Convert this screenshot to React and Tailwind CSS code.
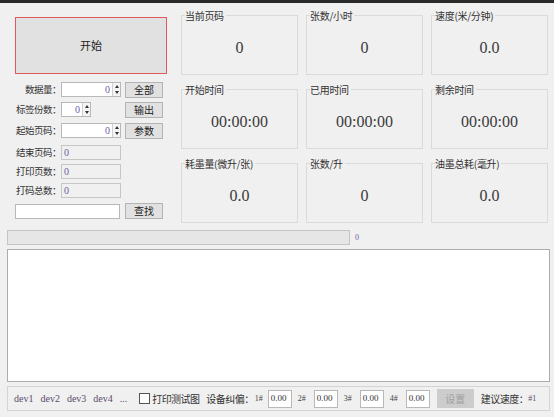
import React from 'react'

const cjk = { fontFamily: '"Noto Sans CJK SC", "Noto Sans", sans-serif' }
const serif = { fontFamily: '"Liberation Serif", "DejaVu Serif", serif' }

function Spinner() {
    return (
        <div className="flex flex-col w-[8px] h-[13px] border-l border-[#d0d0d0] bg-[#f4f4f4]">
            <div className="flex-1 flex items-center justify-center">
                <div className="w-0 h-0 border-l-[2.5px] border-r-[2.5px] border-b-[3px] border-l-transparent border-r-transparent border-b-[#333]" />
            </div>
            <div className="flex-1 flex items-center justify-center">
                <div className="w-0 h-0 border-l-[2.5px] border-r-[2.5px] border-t-[3px] border-l-transparent border-r-transparent border-t-[#333]" />
            </div>
        </div>
    )
}

function SpinInput({ width }) {
    return (
        <div className={`flex items-center h-[15px] border border-[#b8b8b8] bg-white ${width}`}>
            <span className="flex-1 text-right pr-[2px] text-[10px] leading-none text-[#6b5ca5]" style={serif}>0</span>
            <Spinner />
        </div>
    )
}

function Btn({ children }) {
    return (
        <div className="w-[38px] h-[16px] border border-[#b4b4b4] bg-[#e1e1e1] flex items-center justify-center text-[10px] leading-none text-[#222]" style={cjk}>
            {children}
        </div>
    )
}

function Label({ children }) {
    return (
        <div className="w-[46px] shrink-0 whitespace-nowrap text-right text-[9.5px] leading-none text-[#333] tracking-[-0.5px]" style={cjk}>{children}</div>
    )
}

function ReadRow({ label, className }) {
    return (
        <div className={`flex items-center h-[15px] ${className}`}>
            <Label>{label}</Label>
            <div className="w-[60px] h-[15px] border border-[#c6c6c6] bg-[#f0f0f0] flex items-center pl-[2px] text-[10px] leading-none text-[#6b5ca5]" style={serif}>0</div>
        </div>
    )
}

function Group({ title, value }) {
    return (
        <div className="relative h-[60px] border border-[#dadada]">
            <span className="absolute -top-[7px] left-[3px] bg-[#f0f0f0] pr-[2px] whitespace-nowrap text-[10px] leading-[13px] text-[#333] tracking-[-0.3px]" style={cjk}>{title}</span>
            <div className="h-full flex items-center justify-center pt-[5px] text-[16px] text-[#3a3a3a]" style={serif}>{value}</div>
        </div>
    )
}

const groups = [
    ['当前页码', '0'],
    ['张数/小时', '0'],
    ['速度(米/分钟)', '0.0'],
    ['开始时间', '00:00:00'],
    ['已用时间', '00:00:00'],
    ['剩余时间', '00:00:00'],
    ['耗墨量(微升/张)', '0.0'],
    ['张数/升', '0'],
    ['油墨总耗(毫升)', '0.0'],
]

function SmallInput() {
    return (
        <div className="w-[24px] h-[18px] shrink-0 border border-[#b8b8b8] bg-white flex items-center pl-[2px] text-[9px] leading-none text-[#333]" style={serif}>0.00</div>
    )
}

function Num({ children }) {
    return <span className="w-[10px] shrink-0 text-[8px] text-[#444] mx-[6px] whitespace-nowrap" style={serif}>{children}</span>
}

export default function App() {
    return (
        <div className="w-[554px] h-[417px] bg-[#f0f0f0] overflow-hidden">
            <div className="h-[3px] bg-[#2a2a2a]" />

            {/* top area */}
            <div className="flex h-[227px]">
                <div className="ml-[15px] mt-[14px] w-[152px]">
                    <div className="h-[57px] border border-[#e05a5a] bg-[#e1e1e1] flex items-center justify-center text-[11px] text-[#222]" style={cjk}>
                        开始
                    </div>

                    <div className="w-[148px] flex items-center justify-between h-[15px] mt-[8px]">
                        <div className="flex items-center">
                            <Label>数据量：</Label>
                            <SpinInput width="w-[60px]" />
                        </div>
                        <Btn>全部</Btn>
                    </div>
                    <div className="w-[148px] flex items-center justify-between h-[15px] mt-[5px]">
                        <div className="flex items-center">
                            <Label>标签份数：</Label>
                            <SpinInput width="w-[30px]" />
                        </div>
                        <Btn>输出</Btn>
                    </div>
                    <div className="w-[148px] flex items-center justify-between h-[15px] mt-[6px]">
                        <div className="flex items-center">
                            <Label>起始页码：</Label>
                            <SpinInput width="w-[60px]" />
                        </div>
                        <Btn>参数</Btn>
                    </div>

                    <ReadRow label="结束页码：" className="mt-[7px]" />
                    <ReadRow label="打印页数：" className="mt-[4px]" />
                    <ReadRow label="打码总数：" className="mt-[4px]" />

                    <div className="w-[148px] flex items-center justify-between mt-[5px]">
                        <div className="w-[105px] h-[15px] border border-[#b8b8b8] bg-white" />
                        <Btn>查找</Btn>
                    </div>
                </div>

                <div className="ml-[14px] mt-[12px] w-[367px] grid grid-cols-3 gap-x-[8px] gap-y-[14px] content-start">
                    {groups.map(([t, v]) => (
                        <Group key={t} title={t} value={v} />
                    ))}
                </div>
            </div>

            {/* progress */}
            <div className="flex items-center px-[7px]">
                <div className="w-[343px] h-[15px] border border-[#c4c4c4] bg-[#e6e6e6]" />
                <span className="ml-[5px] text-[8px] text-[#6b5ca5]" style={serif}>0</span>
            </div>

            {/* log */}
            <div className="mx-[7px] mt-[4px] w-[543px] h-[133px] border border-[#adadad] bg-white" />

            {/* status bar */}
            <div className="mx-[7px] mt-[4px] w-[543px] h-[25px] border border-[#d4d4d4] flex items-center pl-[6px] text-[#333]">
                <div className="flex gap-[7px] text-[10px] text-[#5a4d6b]" style={serif}>
                    <span>dev1</span>
                    <span>dev2</span>
                    <span>dev3</span>
                    <span>dev4</span>
                    <span>...</span>
                </div>
                <div className="ml-[12px] w-[11px] h-[11px] shrink-0 border border-[#555] bg-white" />
                <span className="ml-[2px] whitespace-nowrap text-[10px] tracking-[-0.6px]" style={cjk}>打印测试图</span>
                <span className="ml-[7px] whitespace-nowrap text-[10px] tracking-[-0.5px]" style={cjk}>设备纠偏：</span>
                <span className="w-[10px] shrink-0 text-[8px] text-[#444] ml-[1px] mr-[3px] whitespace-nowrap" style={serif}>1#</span>
                <SmallInput />
                <Num>2#</Num>
                <SmallInput />
                <Num>3#</Num>
                <SmallInput />
                <Num>4#</Num>
                <SmallInput />
                <div className="ml-[7px] w-[37px] h-[19px] shrink-0 bg-[#cccccc] flex items-center justify-center text-[10px] text-[#a0a0a0]" style={cjk}>设置</div>
                <span className="ml-[7px] whitespace-nowrap text-[10px] tracking-[-0.5px]" style={cjk}>建议速度：</span>
                <span className="text-[8px] text-[#5a4d6b]" style={serif}>#1</span>
            </div>
        </div>
    )
}
